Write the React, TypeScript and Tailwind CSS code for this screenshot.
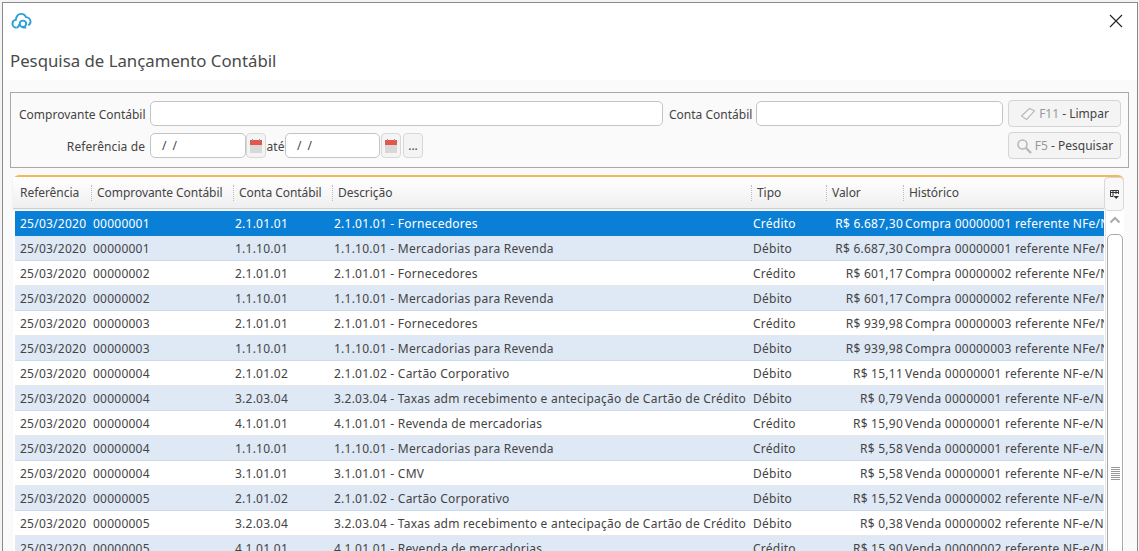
const rows: string[][] = [
  ["00000001", "2.1.01.01", "2.1.01.01 - Fornecedores", "Crédito", "R$ 6.687,30", "Compra 00000001 referente NFe/NFS-e"],
  ["00000001", "1.1.10.01", "1.1.10.01 - Mercadorias para Revenda", "Débito", "R$ 6.687,30", "Compra 00000001 referente NFe/NFS-e"],
  ["00000002", "2.1.01.01", "2.1.01.01 - Fornecedores", "Crédito", "R$ 601,17", "Compra 00000002 referente NFe/NFS-e"],
  ["00000002", "1.1.10.01", "1.1.10.01 - Mercadorias para Revenda", "Débito", "R$ 601,17", "Compra 00000002 referente NFe/NFS-e"],
  ["00000003", "2.1.01.01", "2.1.01.01 - Fornecedores", "Crédito", "R$ 939,98", "Compra 00000003 referente NFe/NFS-e"],
  ["00000003", "1.1.10.01", "1.1.10.01 - Mercadorias para Revenda", "Débito", "R$ 939,98", "Compra 00000003 referente NFe/NFS-e"],
  ["00000004", "2.1.01.02", "2.1.01.02 - Cartão Corporativo", "Débito", "R$ 15,11", "Venda 00000001 referente NF-e/NFS-e"],
  ["00000004", "3.2.03.04", "3.2.03.04 - Taxas adm recebimento e antecipação de Cartão de Crédito", "Débito", "R$ 0,79", "Venda 00000001 referente NF-e/NFS-e"],
  ["00000004", "4.1.01.01", "4.1.01.01 - Revenda de mercadorias", "Crédito", "R$ 15,90", "Venda 00000001 referente NF-e/NFS-e"],
  ["00000004", "1.1.10.01", "1.1.10.01 - Mercadorias para Revenda", "Crédito", "R$ 5,58", "Venda 00000001 referente NF-e/NFS-e"],
  ["00000004", "3.1.01.01", "3.1.01.01 - CMV", "Débito", "R$ 5,58", "Venda 00000001 referente NF-e/NFS-e"],
  ["00000005", "2.1.01.02", "2.1.01.02 - Cartão Corporativo", "Débito", "R$ 15,52", "Venda 00000002 referente NF-e/NFS-e"],
  ["00000005", "3.2.03.04", "3.2.03.04 - Taxas adm recebimento e antecipação de Cartão de Crédito", "Débito", "R$ 0,38", "Venda 00000002 referente NF-e/NFS-e"],
  ["00000005", "4.1.01.01", "4.1.01.01 - Revenda de mercadorias", "Crédito", "R$ 15,90", "Venda 00000002 referente NF-e/NFS-e"],
];

const Calendar = () => (
  <div className="w-[20px] h-[25px] border border-[#d8d8d8] rounded-[4px] bg-[#f4f4f4] flex items-center justify-center shrink-0">
    <svg width="14" height="16" viewBox="0 0 14 16">
      <rect x="1" y="2" width="12" height="13" fill="#d8d8d8" />
      <rect x="1" y="2" width="12" height="5" fill="#e2574c" />
      <rect x="3" y="1" width="1" height="2" fill="#999" />
      <rect x="10" y="1" width="1" height="2" fill="#999" />
    </svg>
  </div>
);

const Header = ({ w, label, sep = true }: { w: string; label: string; sep?: boolean }) => (
  <div className={`${w} h-full flex items-center shrink-0`}>
    {sep && <div className="h-[16px] border-l border-dotted border-[#bdbdbd] mr-[5px]" />}
    <span className={sep ? "" : "pl-[5px]"}>{label}</span>
  </div>
);

export default function App() {
  return (
    <div className="h-[551px] w-[1139px] overflow-hidden bg-[#f4f4f4] pt-[2px] pl-[2px] pr-[1px] text-[12px] text-[#444] font-['Noto_Sans','Open_Sans',sans-serif]">
      <div className="h-[560px] border border-[#8a8a8a] border-b-0 bg-[#fafafa] flex flex-col">
        <div className="h-[77px] bg-white shrink-0 pl-[8px] pr-[14px]">
          <div className="flex justify-between items-start pt-[8px] h-[40px]">
            <svg width="21" height="19" viewBox="0 0 22 20" fill="none" stroke="#2b9fd8" strokeWidth="2">
              <path d="M6 17.5H5.5C3 17.5 1.5 15.5 1.5 13.3 1.5 11 3.2 9.6 5 9.4 5.2 6 7.5 3 10.5 3 13 3 15 4.4 15.6 6.4 18 6.4 20.5 8.4 20.5 11 20.5 13 19.2 14.4 18 15" />
              <circle cx="12.5" cy="13.5" r="3.4" />
              <path d="M8.8 14C8 16.5 7 17.5 6 17.5M12 17.5H16" />
            </svg>
            <svg className="mt-[3px]" width="14" height="14" viewBox="0 0 14 14" stroke="#222" strokeWidth="1.1">
              <path d="M1 1L13 13M13 1L1 13" />
            </svg>
          </div>
          <div className="text-[16.8px] leading-[24px] mt-[6px] -ml-[1px] text-[#4a4a4a]">Pesquisa de Lançamento Contábil</div>
        </div>

        <div className="mt-[12px] ml-[7px] mr-[8px] h-[76px] border border-[#a8a8a8] flex flex-col gap-[7px] pt-[8px] pl-[8px] pr-[6px] shrink-0 whitespace-nowrap">
          <div className="flex items-center h-[25px]">
            <span className="w-[127px] pr-[1px] pt-[2px] text-right shrink-0">Comprovante Contábil</span>
            <div className="ml-[4px] w-[513px] h-[25px] border border-[#c4c4c4] rounded-[5px] bg-white shrink-0" />
            <span className="ml-[6px] w-[83px] pt-[2px] shrink-0">Conta Contábil</span>
            <div className="ml-[4px] w-[247px] h-[25px] border border-[#c4c4c4] rounded-[5px] bg-white shrink-0" />
            <button className="ml-[5px] w-[113px] h-[27px] border border-[#d4d4d4] rounded-[4px] bg-[#f4f4f4] flex items-center justify-center gap-[3px] shrink-0">
              <svg width="16" height="16" viewBox="0 0 16 16" fill="#f8f8f8" stroke="#b8b8b8" strokeWidth="1.1">
                <path d="M1.5 10L9.5 2.5L14.5 5L6.5 13.5Z" />
              </svg>
              <span><span className="text-[#999]">F11</span> - Limpar</span>
            </button>
          </div>
          <div className="flex items-center h-[25px]">
            <span className="w-[127px] pr-[1px] pt-[2px] text-right shrink-0 tracking-[0.1px]">Referência de</span>
            <div className="ml-[4px] w-[96px] h-[25px] border border-[#c4c4c4] rounded-[5px] bg-white pl-[11px] leading-[24px] tracking-[1.5px] shrink-0">/ /</div>
            <Calendar />
            <span className="w-[19px] pt-[2px] text-center shrink-0">até</span>
            <div className="w-[95px] h-[25px] border border-[#c4c4c4] rounded-[5px] bg-white pl-[11px] leading-[24px] tracking-[1.5px] shrink-0">/ /</div>
            <div className="ml-[1px]"><Calendar /></div>
            <div className="ml-[2px] w-[20px] h-[25px] border border-[#d8d8d8] rounded-[4px] bg-[#f4f4f4] text-center leading-[24px] shrink-0">...</div>
            <button className="ml-auto mr-[1px] w-[113px] h-[27px] border border-[#d4d4d4] rounded-[4px] bg-[#f4f4f4] flex items-center justify-center gap-[3px] pt-[1px] shrink-0">
              <svg width="16" height="16" viewBox="0 0 16 16" fill="none" stroke="#b8b8b8" strokeWidth="1.6">
                <circle cx="6.5" cy="6.5" r="4.5" />
                <path d="M10 10L15 15" strokeWidth="2.4" />
              </svg>
              <span><span className="text-[#999]">F5</span> - Pesquisar</span>
            </button>
          </div>
        </div>

        <div className="ml-[10px] mr-[13px] mt-[7px] flex-1 bg-white rounded-t-[6px] border-t-2 border-[#f5b75c] flex flex-col min-h-0">
          <div className="flex h-[32px] shrink-0 whitespace-nowrap tracking-[-0.05px]">
            <div className="flex-1 flex h-full bg-gradient-to-b from-white to-[#efefef] border-b border-[#d0d0d0] shadow-[0_1px_2px_rgba(0,0,0,0.1)] pl-[2px]">
              <Header w="w-[76px]" label="Referência" sep={false} />
              <Header w="w-[142px]" label="Comprovante Contábil" />
              <Header w="w-[99px]" label="Conta Contábil" />
              <Header w="w-[419px]" label="Descrição" />
              <Header w="w-[75px]" label="Tipo" />
              <Header w="w-[77px]" label="Valor" />
              <Header w="w-[199px]" label="Histórico" />
            </div>
            <div className="w-[20px] h-[34px] border border-[#d8d8d8] rounded-[4px] bg-[#f8f8f8] flex items-center justify-center shrink-0">
              <svg width="11" height="11" viewBox="0 0 11 11" fill="none" stroke="#333">
                <path d="M1.5 7.5V1.5H9.5V5M1.5 3.5H9.5M4 1.5V7.5H1.5M7 1.5V5" />
                <path d="M4.5 7H10L7.2 10Z" fill="#333" stroke="none" />
              </svg>
            </div>
          </div>
          <div className="flex flex-1 min-h-0 mt-[2px]">
            <div className="w-[1089px] shrink-0 overflow-hidden ml-[2px] tracking-[0.24px]">
              {rows.map((r, i) => (
                <div
                  key={i}
                  className={`flex h-[25px] items-center pt-[1px] whitespace-nowrap border-b ${i === 0 ? "bg-[#0a7fd6] text-white border-[#0a7fd6]" : i % 2 ? "bg-[#dfe8f5] border-[#cfd9e8]" : "bg-white border-[#e8e8e8]"}`}
                >
                  <div className="w-[78px] pl-[5px] shrink-0">25/03/2020</div>
                  <div className="w-[142px] shrink-0">{r[0]}</div>
                  <div className="w-[99px] shrink-0">{r[1]}</div>
                  <div className="w-[419px] shrink-0">{r[2]}</div>
                  <div className="w-[65px] shrink-0">{r[3]}</div>
                  <div className="w-[85px] text-right shrink-0">{r[4]}</div>
                  <div className="ml-[2px] shrink-0">{r[5]}</div>
                </div>
              ))}
            </div>
            <div className="w-[19px] ml-[1px] flex flex-col items-center border-l border-[#e4e4e4] shrink-0">
              <svg className="mt-[5px] shrink-0" width="12" height="8" viewBox="0 0 12 8" fill="none" stroke="#aaa" strokeWidth="2">
                <path d="M1.5 6.5L6 2L10.5 6.5" />
              </svg>
              <div className="mt-[10px] w-[16px] h-[400px] border border-[#a8a8a8] rounded-[5px] bg-white flex flex-col items-center pt-[232px] shrink-0">
                <div className="w-[9px] h-[14px] bg-[repeating-linear-gradient(#999_0,#999_1px,transparent_1px,transparent_2px)]" />
              </div>
            </div>
          </div>
        </div>
      </div>
    </div>
  );
}
